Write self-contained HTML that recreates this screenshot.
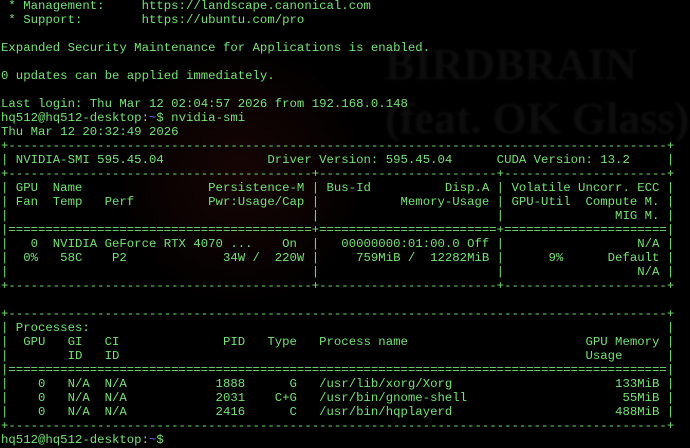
<!DOCTYPE html>
<html><head><meta charset="utf-8"><style>
html,body{margin:0;padding:0;background:#000;width:690px;height:448px;overflow:hidden;position:relative}
.bg1{position:absolute;left:120px;top:50px;width:240px;height:250px;background:radial-gradient(ellipse at center,rgba(50,10,10,0.45) 0%,rgba(30,6,6,0.3) 50%,rgba(0,0,0,0) 75%)}
.bg2{position:absolute;left:385px;top:38px;font-family:"Liberation Serif",serif;font-size:44px;line-height:54px;color:#0d0d0d;font-weight:bold;white-space:pre;filter:blur(1px)}
pre{position:absolute;left:1px;top:-1px;margin:0;font-family:"Liberation Mono",monospace;font-size:12.33px;line-height:14px;color:#72e472;white-space:pre}
.c{color:#b8b8b8}.b{color:#6c6cff}
</style></head><body>
<div class="bg1"></div>
<div class="bg2">BIRDBRAIN
(feat. OK Glass)</div>
<pre> * Management:     https://landscape.canonical.com
 * Support:        https://ubuntu.com/pro

Expanded Security Maintenance for Applications is enabled.

0 updates can be applied immediately.

Last login: Thu Mar 12 02:04:57 2026 from 192.168.0.148
hq512@hq512-desktop<span class="c">:</span><span class="b">~</span>$ nvidia-smi
Thu Mar 12 20:32:49 2026
+-----------------------------------------------------------------------------------------+
| NVIDIA-SMI 595.45.04              Driver Version: 595.45.04      CUDA Version: 13.2     |
+-----------------------------------------+------------------------+----------------------+
| GPU  Name                 Persistence-M | Bus-Id          Disp.A | Volatile Uncorr. ECC |
| Fan  Temp   Perf          Pwr:Usage/Cap |           Memory-Usage | GPU-Util  Compute M. |
|                                         |                        |               MIG M. |
|=========================================+========================+======================|
|   0  NVIDIA GeForce RTX 4070 ...    On  |   00000000:01:00.0 Off |                  N/A |
|  0%   58C    P2             34W /  220W |     759MiB /  12282MiB |      9%      Default |
|                                         |                        |                  N/A |
+-----------------------------------------+------------------------+----------------------+

+-----------------------------------------------------------------------------------------+
| Processes:                                                                              |
|  GPU   GI   CI              PID   Type   Process name                        GPU Memory |
|        ID   ID                                                               Usage      |
|=========================================================================================|
|    0   N/A  N/A            1888      G   /usr/lib/xorg/Xorg                      133MiB |
|    0   N/A  N/A            2031    C+G   /usr/bin/gnome-shell                     55MiB |
|    0   N/A  N/A            2416      C   /usr/bin/hqplayerd                      488MiB |
+-----------------------------------------------------------------------------------------+
hq512@hq512-desktop<span class="c">:</span><span class="b">~</span>$</pre>
</body></html>
